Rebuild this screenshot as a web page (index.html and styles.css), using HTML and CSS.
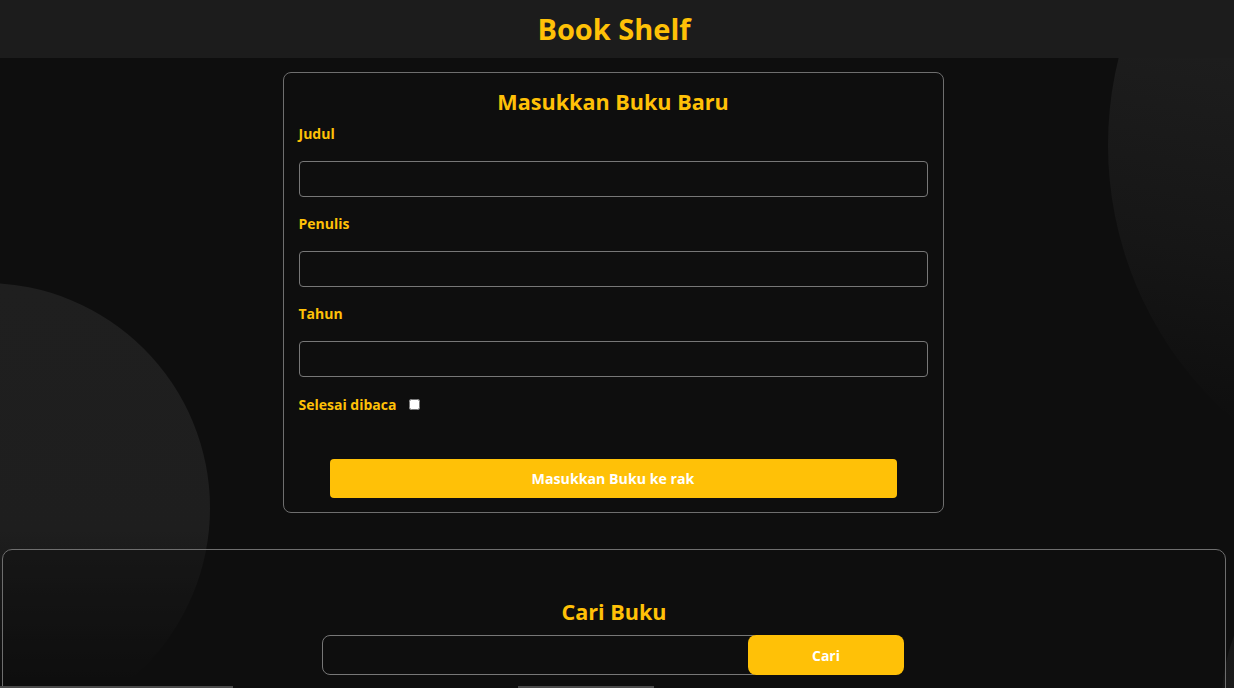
FILE: index.html
```html
<!DOCTYPE html>
<html lang="id">
<head>
<meta charset="utf-8">
<title>Book Shelf</title>
<link rel="stylesheet" href="styles.css">
</head>
<body>
<div class="deco deco-left"></div>
<div class="deco deco-right"></div>
<div class="deco deco-corner"></div>

<header class="app-header">
  <h1 class="app-title">Book Shelf</h1>
</header>

<main class="main">
  <section class="input-card">
    <h2 class="section-title">Masukkan Buku Baru</h2>
    <form class="book-form">
      <div class="field">
        <label class="field-label" for="inputBookTitle">Judul</label>
        <input class="field-input" id="inputBookTitle" type="text">
      </div>
      <div class="field">
        <label class="field-label" for="inputBookAuthor">Penulis</label>
        <input class="field-input" id="inputBookAuthor" type="text">
      </div>
      <div class="field">
        <label class="field-label" for="inputBookYear">Tahun</label>
        <input class="field-input" id="inputBookYear" type="number">
      </div>
      <div class="check-row">
        <label class="field-label" for="inputBookIsComplete">Selesai dibaca</label>
        <input class="check" id="inputBookIsComplete" type="checkbox">
      </div>
      <button class="submit-btn" type="button">Masukkan Buku ke rak</button>
    </form>
  </section>

  <section class="search-card">
    <h2 class="section-title">Cari Buku</h2>
    <form class="search-form">
      <input class="search-input" type="text">
      <button class="search-btn" type="button">Cari</button>
    </form>
  </section>
</main>

<div class="peek peek-a"></div>
<div class="peek peek-b"></div>
</body>
</html>
```

FILE: styles.css
```css
* { box-sizing: border-box; }

html, body {
  margin: 0;
  padding: 0;
  height: 100%;
  overflow: hidden;
}

body {
  background: #0e0e0e;
  font-family: "Open Sans", "Noto Sans", "Liberation Sans", sans-serif;
  color: #ffc107;
  position: relative;
}

.deco {
  position: absolute;
  border-radius: 50%;
  z-index: 0;
  pointer-events: none;
}

.deco-left {
  left: -240px;
  top: 283px;
  width: 450px;
  height: 450px;
  background: linear-gradient(to bottom, #1f1f1f 0%, #1e1e1e 55%, #0e0e0e 88%);
}

.deco-right {
  left: 1108px;
  top: -218px;
  width: 726px;
  height: 726px;
  background: linear-gradient(190deg, #202020 0%, #1d1d1d 45%, #161616 68%, #0e0e0e 88%);
}

.deco-corner {
  left: 1222px;
  top: 522px;
  width: 356px;
  height: 356px;
  background: linear-gradient(to bottom, #141414 0%, #1c1c1c 60%);
}

.app-header {
  position: relative;
  z-index: 1;
  height: 58px;
  background: #1c1c1c;
  display: flex;
  align-items: center;
  justify-content: center;
  padding-right: 6px;
}

.app-title {
  margin: 0;
  font-size: 29px;
  font-weight: 700;
  line-height: 40px;
  color: #ffc107;
}

.main {
  position: relative;
  z-index: 1;
  width: 1228px;
  display: flex;
  flex-direction: column;
  align-items: center;
  padding-top: 14px;
}

.input-card {
  width: 661px;
  margin-right: 2px;
  border: 1px solid #6e6e6e;
  border-radius: 8px;
  background: #0e0e0e;
  padding: 14px 15px 14px 15px;
}

.section-title {
  margin: 0;
  text-align: center;
  font-size: 21.6px;
  line-height: 30px;
  font-weight: 700;
  color: #ffc107;
}

.input-card .section-title {
  line-height: 29px;
}

.book-form {
  display: flex;
  flex-direction: column;
  margin-top: 8px;
}

.field {
  display: flex;
  flex-direction: column;
  gap: 17px;
  margin-bottom: 17px;
}

.field-label {
  font-size: 14px;
  line-height: 20px;
  font-weight: 700;
  color: #ffc107;
}

.field-input {
  width: 100%;
  height: 36px;
  background: #0e0e0e;
  border: 1px solid #777;
  border-radius: 4px;
  color: #fff;
  font-family: inherit;
  font-size: 14px;
  padding: 0 8px;
  margin: 0;
  outline: none;
}

.check-row {
  display: flex;
  align-items: center;
  gap: 13px;
  margin-top: 1px;
}

.check {
  width: 11px;
  height: 11px;
  margin: 0 0 2px 0;
}

.submit-btn {
  margin: 44px auto 0;
  width: 567px;
  height: 39px;
  border: none;
  border-radius: 4px;
  background: #ffc107;
  color: #fff;
  font-family: inherit;
  font-size: 14.2px;
  font-weight: 700;
  cursor: pointer;
}

.search-card {
  margin-top: 36px;
  width: 1224px;
  height: 200px;
  border: 1px solid #6e6e6e;
  border-radius: 10px;
  background: rgba(14, 14, 14, 0.4);
  padding-top: 47px;
  display: flex;
  flex-direction: column;
  align-items: center;
}

.search-form {
  margin-top: 8px;
  width: 582px;
  display: flex;
  margin-right: 2px;
}

.search-input {
  flex: 1;
  height: 40px;
  margin: 0 -12px 0 0;
  background: #0e0e0e;
  border: 1px solid #777;
  border-radius: 8px;
  color: #fff;
  font-family: inherit;
  padding: 0 10px;
  outline: none;
}

.search-btn {
  position: relative;
  width: 156px;
  height: 40px;
  border: none;
  border-radius: 8px;
  background: #ffc107;
  color: #fff;
  font-family: inherit;
  font-size: 14px;
  font-weight: 700;
  cursor: pointer;
}

.peek {
  position: absolute;
  top: 686px;
  height: 2px;
  background: #4a4a4a;
  z-index: 2;
}

.peek-a { left: 0; width: 233px; }
.peek-b { left: 518px; width: 136px; }
```
